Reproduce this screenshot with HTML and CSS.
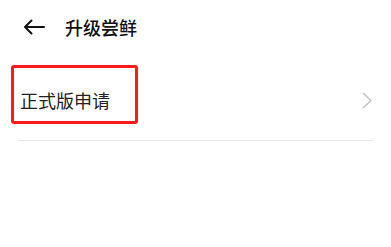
FILE: index.html
```html
<!DOCTYPE html>
<html lang="zh-CN">
<head>
  <meta charset="UTF-8">
  <title>升级尝鲜</title>
  <link rel="stylesheet" href="styles.css">
</head>
<body>

<div class="header">
  <svg class="back" width="22" height="16" viewBox="0 0 22 16">
    <path d="M21 8H2M8.5 1.5L2 8l6.5 6.5" fill="none" stroke="#111" stroke-width="2" stroke-linecap="round" stroke-linejoin="round"/>
  </svg>
  <h1>升级尝鲜</h1>
</div>

<div class="list">
  <div class="item">
    <span class="label">正式版申请</span>
    <svg class="chevron" width="10" height="17" viewBox="0 0 10 17">
      <path d="M1 1l8 7.5L1 16" fill="none" stroke="#bdbdbd" stroke-width="1.3"/>
    </svg>
  </div>
</div>

</body>
</html>
```

FILE: styles.css
```css
body {
  margin: 0;
  background: #fff;
  font-family: "Noto Sans CJK SC", "Noto Sans", sans-serif;
  color: #1a1a1a;
}
.header {
  height: 53px;
  display: flex;
  align-items: center;
}
.back { margin-left: 23px; }
h1 {
  margin: 0 0 0 20px;
  font-size: 18px;
  font-weight: 500;
  line-height: 18px;
  color: #111;
}
.list { margin: 0 18px; }
.item {
  height: 80px;
  padding-top: 7px;
  display: flex;
  align-items: center;
  justify-content: space-between;
  border-bottom: 1px solid #e6e6e6;
}
.label {
  position: relative;
  margin-left: 2px;
  font-size: 18px;
  line-height: 18px;
  color: #222;
}
/* red annotation box drawn over the label */
.label::after {
  content: "";
  position: absolute;
  left: -9px;
  top: -26px;
  right: -28px;
  bottom: -15px;
  border: 3px solid #ff1b1b;
  border-radius: 3px;
}
.chevron { margin-right: 1px; }
```
